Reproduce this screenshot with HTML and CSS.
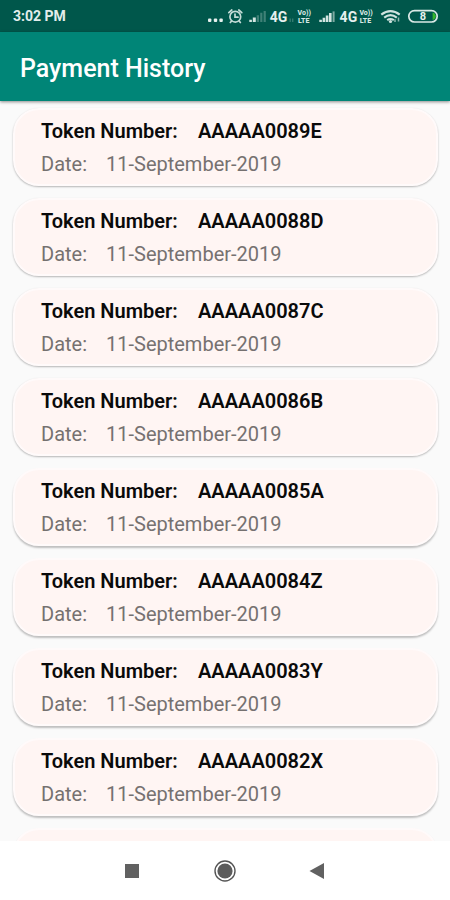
FILE: index.html
```
<!DOCTYPE html>
<html lang="en">
<head>
  <meta charset="UTF-8">
  <meta name="viewport" content="width=device-width, initial-scale=1.0">
  <title>Payment History</title>
  <link rel="stylesheet" href="styles.css">
</head>
<body>
  <div class="status-bar">
    <span class="time">3:02 PM</span>
    <svg class="status-icons" width="245" height="32" viewBox="200 0 245 32">
      <!-- more notifications -->
      <g fill="#e6f0ee">
        <rect x="208" y="18.5" width="3.4" height="3.4" rx="1"/>
        <rect x="213.8" y="18.5" width="3.4" height="3.4" rx="1"/>
        <rect x="219.4" y="18.5" width="3.4" height="3.4" rx="1"/>
      </g>
      <!-- alarm -->
      <g fill="none" stroke="#c4dcd7" stroke-width="1.7" stroke-linecap="round">
        <circle cx="235.3" cy="16.7" r="5.4"/>
        <path d="M228.8 12.6l3-2.6M241.8 12.6l-3-2.6M235 14v3.2h3M231.5 21.2l-1.2 1.3M239.2 21.2l1.2 1.3"/>
      </g>
      <!-- sim 1 -->
      <path fill="#d2e5e1" d="M249.3 22v-2.2h2.6V22zM252.8 22v-4.4h3V22z"/>
      <path fill="#3f8177" d="M256.7 22v-6.8h2.3V22zM260.2 22v-9.2h2.2V22zM263.6 22V11h2.2v11z"/>
      <text class="net" x="269.8" y="21.8">4G</text>
      <path fill="#347b70" d="M289.5 18.5h1.4V22h-1.4zM292 18.5h1.4V22H292z"/>
      <text class="volte" x="297.6" y="15.4">Vo))</text>
      <text class="volte" x="298" y="22.6">LTE</text>
      <!-- sim 2 -->
      <path fill="#d2e5e1" d="M319.3 22v-2.2h2.6V22zM322.6 22v-4.2h2.6V22zM325.8 22v-6.6h2.6V22zM329 22v-9h2.6v9z"/>
      <path fill="#7daaa2" d="M332.6 22V11.4h2V22z"/>
      <text class="net" x="339.6" y="21.8">4G</text>
      <text class="volte" x="359.4" y="15.4">Vo))</text>
      <text class="volte" x="359.8" y="22.6">LTE</text>
      <!-- wifi -->
      <g fill="none" stroke="#cfe3df" stroke-width="2.2">
        <path d="M381.3 14.6q9.2-7 18.4 0"/>
        <path d="M384.2 17.6q6.3-4.8 12.6 0"/>
        <path d="M387.2 20.2q3.3-2.4 6.6 0"/>
      </g>
      <circle cx="390.5" cy="21.5" r="1.6" fill="#cfe3df"/>
      <path d="M395 22v-2.8M398.5 17.5v4" stroke="#8db6af" stroke-width="1.5"/>
      <!-- battery -->
      <rect x="408.8" y="10.6" width="28.4" height="11.4" rx="5.7" fill="none" stroke="#dbe9e6" stroke-width="1.7"/>
      <path d="M432.6 12.5q3.2 1 3.2 3.8t-3.2 3.8z" fill="#35b52b"/>
      <text class="battery" x="419.8" y="20.3">8</text>
    </svg>
  </div>

  <header class="app-bar">
    <h1>Payment History</h1>
  </header>

  <main class="history">
    <div class="card">
      <div class="token"><span class="token-label">Token Number:</span><span>AAAAA0089E</span></div>
      <div class="date"><span class="date-label">Date:</span><span>11-September-2019</span></div>
    </div>
    <div class="card">
      <div class="token"><span class="token-label">Token Number:</span><span>AAAAA0088D</span></div>
      <div class="date"><span class="date-label">Date:</span><span>11-September-2019</span></div>
    </div>
    <div class="card">
      <div class="token"><span class="token-label">Token Number:</span><span>AAAAA0087C</span></div>
      <div class="date"><span class="date-label">Date:</span><span>11-September-2019</span></div>
    </div>
    <div class="card">
      <div class="token"><span class="token-label">Token Number:</span><span>AAAAA0086B</span></div>
      <div class="date"><span class="date-label">Date:</span><span>11-September-2019</span></div>
    </div>
    <div class="card raised">
      <div class="token"><span class="token-label">Token Number:</span><span>AAAAA0085A</span></div>
      <div class="date"><span class="date-label">Date:</span><span>11-September-2019</span></div>
    </div>
    <div class="card raised">
      <div class="token"><span class="token-label">Token Number:</span><span>AAAAA0084Z</span></div>
      <div class="date"><span class="date-label">Date:</span><span>11-September-2019</span></div>
    </div>
    <div class="card raised">
      <div class="token"><span class="token-label">Token Number:</span><span>AAAAA0083Y</span></div>
      <div class="date"><span class="date-label">Date:</span><span>11-September-2019</span></div>
    </div>
    <div class="card raised">
      <div class="token"><span class="token-label">Token Number:</span><span>AAAAA0082X</span></div>
      <div class="date"><span class="date-label">Date:</span><span>11-September-2019</span></div>
    </div>
    <div class="card raised"></div>
  </main>

  <nav class="nav-bar">
    <svg width="24" height="24" viewBox="0 0 24 24"><rect x="5" y="5" width="14" height="14" fill="#616161"/></svg>
    <svg width="24" height="24" viewBox="0 0 24 24">
      <circle cx="12" cy="12" r="10" fill="none" stroke="#555" stroke-width="1.4"/>
      <circle cx="12" cy="12" r="7.6" fill="#5c5c5c"/>
    </svg>
    <svg width="24" height="24" viewBox="0 0 24 24"><path d="M3.5 12L18 4v16z" fill="#616161"/></svg>
  </nav>
</body>
</html>
```

FILE: styles.css
```
* {
  box-sizing: border-box;
}
body {
  margin: 0;
  height: 100vh;
  display: flex;
  flex-direction: column;
  overflow: hidden;
  font-family: Roboto, "Liberation Sans", sans-serif;
  background-color: #fafafa;
}
.status-bar {
  flex: none;
  height: 32px;
  display: flex;
  align-items: center;
  justify-content: space-between;
  padding: 0 5px 0 13px;
  background-color: #00574b;
}
.time {
  color: #e3eeec;
  font-size: 14px;
  font-weight: 700;
  line-height: 32px;
}
.net {
  fill: #e6f0ee;
  font-size: 14px;
  font-weight: 700;
}
.volte {
  fill: #d6e7e4;
  font-size: 7px;
  font-weight: 800;
}
.battery {
  fill: #e6f0ee;
  font-size: 11px;
  font-weight: 700;
}
.app-bar {
  flex: none;
  height: 69px;
  display: flex;
  align-items: center;
  padding: 4px 20px 0;
  background-color: #008577;
  box-shadow: 0 1px 3px rgba(0, 0, 0, 0.45);
  z-index: 1;
}
h1 {
  margin: 0;
  color: #fff;
  font-size: 25px;
  font-weight: 500;
}
.history {
  flex: 1;
  min-height: 0;
  overflow: hidden;
  padding: 7px 12px 0 13px;
}
.card {
  height: 78px;
  margin-bottom: 12px;
  padding: 8px 26px 0;
  border: 2px solid #fffafa;
  border-radius: 26px;
  background-color: #fff5f3;
  box-shadow: 0 1px 2px rgba(0, 0, 0, 0.28);
}
.raised {
  box-shadow: 0 2px 2px rgba(0, 0, 0, 0.24);
}
.token,
.date {
  display: flex;
  height: 33px;
  line-height: 27px;
  white-space: nowrap;
}
.token {
  color: #0a0a0a;
  font-size: 20px;
  font-weight: 600;
}
.date {
  color: #757170;
  font-size: 20px;
}
.token-label {
  width: 157px;
}
.date-label {
  width: 65px;
}
.nav-bar {
  flex: none;
  height: 59px;
  display: flex;
  align-items: center;
  justify-content: center;
  gap: 69px;
  background-color: #fff;
}
```
